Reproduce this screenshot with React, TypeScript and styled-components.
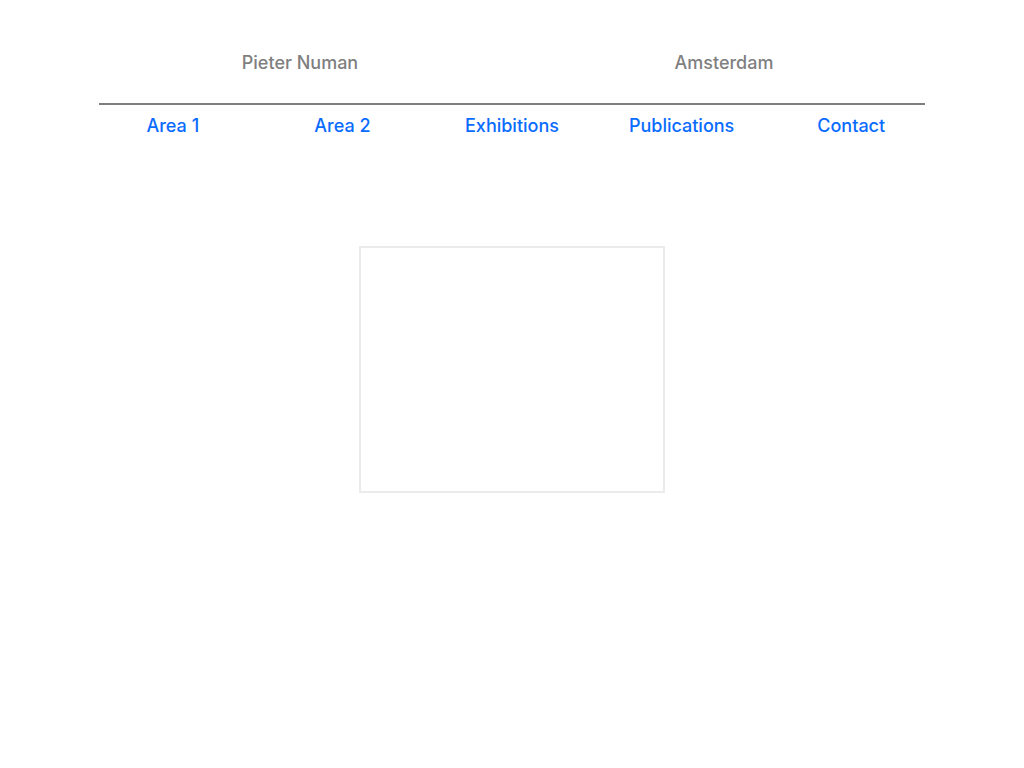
import React from "react";
import styled, { createGlobalStyle } from "styled-components";

const GlobalStyle = createGlobalStyle`
  html, body {
    margin: 0;
    padding: 0;
    background: #ffffff;
  }
  body {
    font-family: Inter, "Liberation Sans", Arial, sans-serif;
  }
`;

const links = ["Area 1", "Area 2", "Exhibitions", "Publications", "Contact"];

const App = () => {
  return (
    <>
      <GlobalStyle />
      <Page>
        <Header>
          <span>Pieter Numan</span>
          <span>Amsterdam</span>
        </Header>
        <Rule />
        <Nav>
          {links.map((l) => (
            <NavLink key={l} href="#">
              {l}
            </NavLink>
          ))}
        </Nav>
        <Main>
          <Frame />
        </Main>
      </Page>
    </>
  );
};

export default App;

const Page = styled.div`
  width: 848px;
  margin: 0 auto;
  display: flex;
  flex-direction: column;
`;

const Header = styled.header`
  display: grid;
  grid-template-columns: 1fr 1fr;
  padding-top: 52px;
  height: 52px;
  box-sizing: border-box;

  > span {
    text-align: center;
    font-size: 18px;
    font-weight: 500;
    line-height: 22px;
    color: #7f7f7f;
  }
`;

const Rule = styled.hr`
  margin: 51px 11px 0;
  border: none;
  height: 2px;
  background: #7f7f7f;
`;

const Nav = styled.nav`
  display: grid;
  grid-template-columns: repeat(5, 1fr);
  padding-top: 10px;
`;

const NavLink = styled.a`
  text-align: center;
  font-size: 18px;
  font-weight: 500;
  line-height: 22px;
  color: #0a6cff;
  text-decoration: none;
`;

const Main = styled.main`
  display: flex;
  justify-content: center;
  padding-top: 109px;
`;

const Frame = styled.div`
  width: 306px;
  height: 247px;
  box-sizing: border-box;
  border: 2px solid #ebebeb;
`;
